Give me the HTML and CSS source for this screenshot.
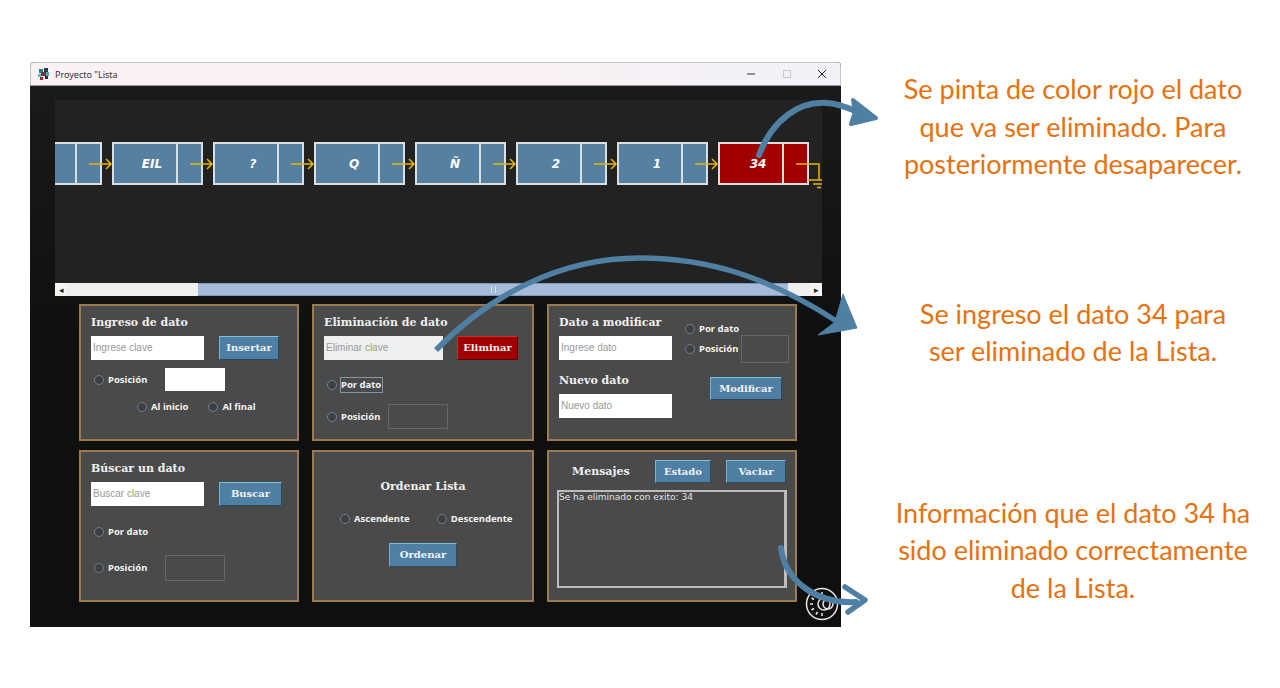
FILE: index.html
```html
<!DOCTYPE html>
<html lang="en">
	<head>
		<title>Proyecto "Lista</title>
		<meta charset="utf-8">
		<link rel="stylesheet" href="styles.css">
	</head>

	<body>
		<div class="window">
			<div class="titlebar">
				<svg class="app-icon" width="12" height="12" viewBox="0 0 12 12">
					<rect x="1" y="1" width="4" height="4" fill="#2a7f8f"/>
					<rect x="6" y="0" width="4" height="4" fill="#2b3a4a"/>
					<rect x="3" y="4" width="5" height="4" fill="#8a2a35"/>
					<rect x="8" y="4" width="3" height="4" fill="#3ab0b8"/>
					<rect x="0" y="6" width="3" height="3" fill="#45c0c8"/>
					<rect x="2" y="9" width="3" height="3" fill="#a52a35"/>
					<rect x="7" y="8" width="3" height="3" fill="#22303c"/>
				</svg>
				<span class="title-text">Proyecto "Lista</span>
				<div class="win-controls">
					<svg width="10" height="10" viewBox="0 0 10 10"><path d="M1 5h8" stroke="#333" stroke-width="1"/></svg>
					<svg width="10" height="10" viewBox="0 0 10 10"><rect x="1.5" y="1.5" width="7" height="7" fill="none" stroke="#c8c8cc"/></svg>
					<svg width="10" height="10" viewBox="0 0 10 10"><path d="M1 1l8 8M9 1l-8 8" stroke="#222" stroke-width="1"/></svg>
				</div>
			</div>

			<div class="content">
				<div class="canvas">
					<div class="list">
						<div class="node first">
							<div class="val"></div><div class="ptr"></div>
							<svg class="link" width="24" height="14" viewBox="0 0 24 14"><path d="M0 7h22M17 2l5 5-5 5" fill="none" stroke="#e8b500" stroke-width="1.5"/></svg>
						</div>
						<div class="node">
							<div class="val">EIL</div><div class="ptr"></div>
							<svg class="link" width="24" height="14" viewBox="0 0 24 14"><path d="M0 7h22M17 2l5 5-5 5" fill="none" stroke="#e8b500" stroke-width="1.5"/></svg>
						</div>
						<div class="node">
							<div class="val">?</div><div class="ptr"></div>
							<svg class="link" width="24" height="14" viewBox="0 0 24 14"><path d="M0 7h22M17 2l5 5-5 5" fill="none" stroke="#e8b500" stroke-width="1.5"/></svg>
						</div>
						<div class="node">
							<div class="val">Q</div><div class="ptr"></div>
							<svg class="link" width="24" height="14" viewBox="0 0 24 14"><path d="M0 7h22M17 2l5 5-5 5" fill="none" stroke="#e8b500" stroke-width="1.5"/></svg>
						</div>
						<div class="node">
							<div class="val">Ñ</div><div class="ptr"></div>
							<svg class="link" width="24" height="14" viewBox="0 0 24 14"><path d="M0 7h22M17 2l5 5-5 5" fill="none" stroke="#e8b500" stroke-width="1.5"/></svg>
						</div>
						<div class="node">
							<div class="val">2</div><div class="ptr"></div>
							<svg class="link" width="24" height="14" viewBox="0 0 24 14"><path d="M0 7h22M17 2l5 5-5 5" fill="none" stroke="#e8b500" stroke-width="1.5"/></svg>
						</div>
						<div class="node">
							<div class="val">1</div><div class="ptr"></div>
							<svg class="link" width="24" height="14" viewBox="0 0 24 14"><path d="M0 7h22M17 2l5 5-5 5" fill="none" stroke="#e8b500" stroke-width="1.5"/></svg>
						</div>
						<div class="node red">
							<div class="val">34</div><div class="ptr"></div>
							<svg class="ground" width="36" height="30" viewBox="0 0 36 30"><path d="M0 7h23v16M12 23h21M17 27h12M21 30.500h4" fill="none" stroke="#e8b500" stroke-width="1.500"/></svg>
						</div>
					</div>
				</div>

				<div class="scrollbar">
					<div class="sb-btn">◂</div>
					<div class="sb-track left"></div>
					<div class="sb-thumb"><span class="grip"></span></div>
					<div class="sb-track right"></div>
					<div class="sb-btn">▸</div>
				</div>

				<div class="panels">
					<div class="panel p-ingreso">
						<div class="heading">Ingreso de dato</div>
						<div class="row gap15">
							<div class="field">Ingrese clave</div>
							<div class="btn w60">Insertar</div>
						</div>
						<div class="row pos-row">
							<span class="radio"></span><span class="lbl">Posición</span>
							<div class="small-field white"></div>
						</div>
						<div class="row ends-row">
							<span class="radio"></span><span class="lbl">Al inicio</span>
							<span class="radio second"></span><span class="lbl">Al final</span>
						</div>
					</div>

					<div class="panel p-elimina">
						<div class="heading">Eliminación de dato</div>
						<div class="row gap14">
							<div class="field wide grey">Eliminar clave</div>
							<div class="btn danger">Eliminar</div>
						</div>
						<div class="row dato-row">
							<span class="radio"></span><span class="lbl focus">Por dato</span>
						</div>
						<div class="row pos2-row">
							<span class="radio"></span><span class="lbl">Posición</span>
							<div class="small-field"></div>
						</div>
					</div>

					<div class="panel p-modifica">
						<div class="mod-left">
							<div class="heading">Dato a modificar</div>
							<div class="field">Ingrese dato</div>
							<div class="heading second-head">Nuevo dato</div>
							<div class="field">Nuevo dato</div>
						</div>
						<div class="mod-right">
							<div class="row"><span class="radio"></span><span class="lbl">Por dato</span></div>
							<div class="row mod-pos">
								<span class="radio"></span><span class="lbl">Posición</span>
								<div class="small-field narrow"></div>
							</div>
							<div class="btn w72 mod-btn">Modificar</div>
						</div>
					</div>

					<div class="panel p-busca">
						<div class="heading">Búscar un dato</div>
						<div class="row gap15">
							<div class="field">Buscar clave</div>
							<div class="btn w63">Buscar</div>
						</div>
						<div class="row busca-dato">
							<span class="radio"></span><span class="lbl">Por dato</span>
						</div>
						<div class="row busca-pos">
							<span class="radio"></span><span class="lbl">Posición</span>
							<div class="small-field tall"></div>
						</div>
					</div>

					<div class="panel p-ordena">
						<div class="heading">Ordenar Lista</div>
						<div class="row orden-row">
							<span class="radio"></span><span class="lbl">Ascendente</span>
							<span class="radio second"></span><span class="lbl">Descendente</span>
						</div>
						<div class="btn w68">Ordenar</div>
					</div>

					<div class="panel p-mensajes">
						<div class="row msg-head">
							<div class="heading">Mensajes</div>
							<div class="btn w56">Estado</div>
							<div class="btn w60">Vaciar</div>
						</div>
						<div class="msg-box">Se ha eliminado con exito: 34</div>
					</div>
				</div>
			</div>

			<svg class="theme-icon" width="34" height="34" viewBox="0 0 34 34">
				<circle cx="17" cy="17" r="15.500" fill="#111" stroke="#e8e8e8" stroke-width="1.500"/>
				<circle cx="19" cy="17" r="6" fill="none" stroke="#e8e8e8" stroke-width="1.500"/>
				<circle cx="23" cy="17" r="5" fill="none" stroke="#e8e8e8" stroke-width="1.500"/>
				<path d="M5 17h3M6.500 11l2.500 1.500M6.500 23l2.500-1.500M11 6.500l1.500 2.500M11 27.500l1.500-2.500M17 5v3M17 26v3" stroke="#e8e8e8" stroke-width="1.500"/>
			</svg>
		</div>

		<div class="notes">
			<p class="note">Se pinta de color rojo el dato<br>que va ser eliminado. Para<br>posteriormente desaparecer.</p>
			<p class="note n2">Se ingreso el dato 34 para<br>ser eliminado de la Lista.</p>
			<p class="note n3">Información que el dato 34 ha<br>sido eliminado correctamente<br>de la Lista.</p>
		</div>

		<!-- callout arrows drawn over the screenshot -->
		<svg class="callouts" width="1280" height="688" viewBox="0 0 1280 688">
			<g fill="none" stroke="#4f80a3" stroke-width="6" stroke-linecap="round">
				<path d="M759 155C772 120 800 100 828 103C840 104 848 108 858 112"/>
				<path d="M436 350C490 295 560 258 640 258C710 258 770 278 838 322" stroke-width="5.500" stroke-linecap="butt"/>
				<path d="M781 548C785 580 815 604 856 602"/>
			</g>
			<g fill="#4f80a3" stroke="#4f80a3" stroke-linejoin="round">
				<path d="M853 100L876 118L851 124L855 112Z" stroke-width="4"/>
				<path d="M843 294L857 328L818 335L835 322Z" stroke-width="1"/>
				<path d="M845 587L865 600L848 612" fill="none" stroke-width="5.500" stroke-linecap="round"/>
			</g>
		</svg>
	</body>
</html>
```

FILE: styles.css
```css
* { box-sizing: border-box; }

body {
	margin: 0;
	height: 688px;
	overflow: hidden;
	background: #fff;
	padding: 62px 0 0 30px;
	display: flex;
	align-items: flex-start;
	position: relative;
	font-family: "Noto Sans", sans-serif;
}

.window {
	position: relative;
	width: 811px;
	height: 565px;
	flex: none;
	display: flex;
	flex-direction: column;
	border-radius: 4px 4px 0 0;
	overflow: hidden;
	background: #161616;
}

.titlebar {
	height: 24px;
	flex: none;
	display: flex;
	align-items: center;
	padding-left: 7px;
	background: linear-gradient(90deg, #f9f1f3, #fbf0f3 50%, #f1f2f8);
	border: 1px solid #c4c4c8;
	border-bottom: 1px solid #9a9a9a;
}

.title-text {
	margin-left: 5px;
	font-size: 9px;
	color: #333;
}

.win-controls {
	margin-left: auto;
	width: 94px;
	padding-right: 13px;
	display: flex;
	justify-content: space-between;
}

.content {
	flex: 1;
	padding: 14px 19px 0 25px;
	background: linear-gradient(180deg, #1a1a1a, #101010 45%, #0f0f0f);
}

.canvas {
	height: 183px;
	background: #222;
	overflow: hidden;
	padding-top: 42px;
}

.list {
	display: flex;
	gap: 10px;
	margin-left: -44px;
	width: 900px;
}

.node {
	position: relative;
	width: 91px;
	height: 43px;
	flex: none;
	display: flex;
	background: #5580a2;
	border: 2px solid #d9dee2;
}

.node.red { background: #a00000; }

.val {
	width: 64px;
	padding-left: 14px;
	border-right: 2px solid #d9dee2;
	display: flex;
	align-items: center;
	justify-content: center;
	color: #fff;
	font: italic bold 12px "DejaVu Sans", sans-serif;
}

.ptr { flex: 1; }

.link {
	position: absolute;
	left: 76px;
	top: 12.500px;
}

.ground {
	position: absolute;
	left: 76px;
	top: 12.500px;
	overflow: visible;
}

.scrollbar {
	height: 13px;
	display: flex;
	background: #f0f0f0;
}

.sb-btn {
	width: 12px;
	flex: none;
	background: #f4f4f4;
	color: #222;
	font-size: 9px;
	line-height: 13px;
	text-align: center;
}

.sb-track.left { width: 131px; background: #efefef; }
.sb-track.right { width: 22px; background: #efefef; }

.sb-thumb {
	flex: 1;
	background: #a6bbd7;
	border-top: 1px solid #7d97bb;
	border-bottom: 1px solid #7d97bb;
	display: flex;
	align-items: center;
	justify-content: center;
}

.grip {
	width: 5px;
	height: 7px;
	border-left: 1px solid #dbe4f0;
	border-right: 1px solid #dbe4f0;
}

.panels {
	display: grid;
	grid-template-columns: 220px 222px 250px;
	grid-template-rows: 137px 152px;
	column-gap: 13px;
	row-gap: 9px;
	margin: 8px 0 0 24px;
}

.panel {
	background: #4a4a4a;
	border: 2px solid #9a7a4e;
	padding: 10px;
	color: #f2f2f2;
}

.heading {
	font: bold 11px/14px "DejaVu Serif", serif;
	color: #f0f0f0;
}

.row {
	display: flex;
	align-items: center;
}

.field {
	width: 113px;
	height: 24px;
	background: #fff;
	color: #999;
	font: 10px/24px "Liberation Sans", sans-serif;
	padding-left: 2px;
	flex: none;
}

.field.wide { width: 119px; }
.field.grey { background: #efefef; }

.btn {
	height: 24px;
	flex: none;
	background: #4f7fa3;
	border: 1.500px solid;
	border-color: #7cc0dc #2d4a5f #2d4a5f #6fb4d2;
	color: #f0f4f8;
	font: bold 10px/21px "DejaVu Serif", serif;
	text-align: center;
}

.btn.danger {
	width: 61px;
	background: #a00000;
	border-color: #c03030 #600000 #600000 #c03030;
}

.w56 { width: 56px; }
.w60 { width: 60px; }
.w63 { width: 63px; }
.w68 { width: 68px; }
.w72 { width: 72px; }

.radio {
	width: 10px;
	height: 10px;
	flex: none;
	border-radius: 50%;
	border: 1.500px solid #77808a;
	background: #3c3f44;
}

.lbl {
	margin-left: 4px;
	font: bold 9.500px/14px "Noto Sans", sans-serif;
	color: #f2f2f2;
	white-space: nowrap;
}

.lbl.focus {
	outline: 1px solid #8796a6;
	margin-left: 4px;
	padding: 0 1px 0 0;
}

.small-field {
	width: 60px;
	height: 25px;
	flex: none;
	border: 1.500px solid #666;
}

.small-field.white { background: #fff; border: 0; height: 23px; }
.small-field.narrow { width: 48px; height: 28px; margin-left: 3px; }
.small-field.tall { height: 26px; }

.gap15 { gap: 15px; margin-top: 6px; }
.gap14 { gap: 14px; margin-top: 6px; }

/* Ingreso */
.p-ingreso .pos-row { margin: 8px 0 0 3px; }
.p-ingreso .pos-row .small-field { margin-left: 18px; }
.p-ingreso .ends-row { margin: 9px 0 0 46px; }
.p-ingreso .radio.second { margin-left: 20px; }

/* Eliminacion */
.p-elimina .dato-row { margin: 18px 0 0 3px; }
.p-elimina .pos2-row { margin: 12px 0 0 3px; }
.p-elimina .pos2-row .small-field { margin-left: 8px; }

/* Modificar */
.p-modifica {
	display: flex;
}

.mod-left { width: 113px; flex: none; }
.mod-left .field { margin-top: 6px; }
.second-head { margin-top: 14px; }

.mod-right {
	flex: 1;
	padding-left: 13px;
	margin-top: 6px;
}

.mod-pos { margin-top: -1px; }
.mod-btn { margin: 14px 0 0 25px; height: 23px; }

/* Buscar */
.p-busca .busca-dato { margin: 19px 0 0 3px; }
.p-busca .busca-pos { margin: 16px 0 0 3px; }
.p-busca .busca-pos .small-field { margin-left: 18px; }

/* Ordenar */
.p-ordena { padding-top: 28px; text-align: center; }
.p-ordena .orden-row { margin: 18px 0 0 16px; }
.p-ordena .radio.second { margin-left: 27px; }
.p-ordena .btn { margin: 17px auto 0; }

/* Mensajes */
.p-mensajes { padding: 8px 8px 0 8px; }
.msg-head { padding-left: 15px; height: 23px; }
.msg-head .heading { width: 83px; }
.msg-head .btn { height: 23px; margin-right: 15px; }
.msg-head .btn:last-child { margin-right: 0; }

.msg-box {
	margin-top: 7px;
	width: 230px;
	height: 98px;
	border: 2px solid #bcbcbc;
	border-right-width: 3px;
	font: 9px/11px "DejaVu Sans", sans-serif;
	color: #e4e4e4;
	white-space: nowrap;
}

.theme-icon {
	position: absolute;
	left: 775px;
	top: 525px;
}

.notes {
	width: 414px;
	margin-left: 25px;
	padding-top: 8px;
	flex: none;
	text-align: center;
}

.note {
	margin: 0;
	font: 27px/37.500px "Lato", sans-serif;
	color: #e8710f;
}

.note.n2 { margin-top: 112px; }
.note.n3 { margin-top: 124px; }

.callouts {
	position: absolute;
	left: 0;
	top: 0;
	pointer-events: none;
}
```
